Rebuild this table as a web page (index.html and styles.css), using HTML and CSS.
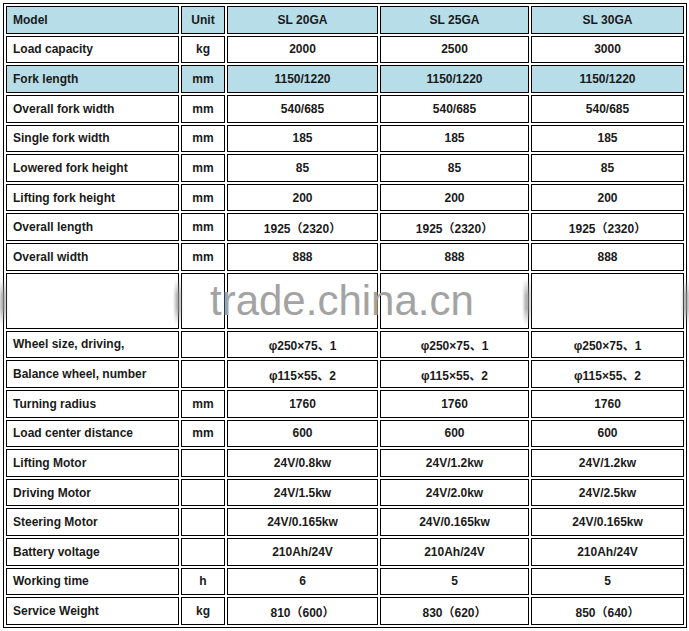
FILE: index.html
```html
<!DOCTYPE html>
<html>
<head>
<meta charset="utf-8">
<link rel="stylesheet" href="styles.css">
</head>
<body>
<div class="sheet">
  <table class="spec">
    <colgroup>
      <col class="c-name"><col class="c-unit"><col class="c-a"><col class="c-b"><col class="c-c">
    </colgroup>
    <tr class="blue"><td class="name">Model</td><td>Unit</td><td>SL 20GA</td><td>SL 25GA</td><td>SL 30GA</td></tr>
    <tr><td class="name">Load capacity</td><td>kg</td><td>2000</td><td>2500</td><td>3000</td></tr>
    <tr class="blue"><td class="name">Fork length</td><td>mm</td><td>1150/1220</td><td>1150/1220</td><td>1150/1220</td></tr>
    <tr><td class="name">Overall fork width</td><td>mm</td><td>540/685</td><td>540/685</td><td>540/685</td></tr>
    <tr><td class="name">Single fork width</td><td>mm</td><td>185</td><td>185</td><td>185</td></tr>
    <tr><td class="name">Lowered fork height</td><td>mm</td><td>85</td><td>85</td><td>85</td></tr>
    <tr><td class="name">Lifting fork height</td><td>mm</td><td>200</td><td>200</td><td>200</td></tr>
    <tr><td class="name">Overall length</td><td>mm</td><td>1925（2320）</td><td>1925（2320）</td><td>1925（2320）</td></tr>
    <tr><td class="name">Overall width</td><td>mm</td><td>888</td><td>888</td><td>888</td></tr>
    <tr class="gap"><td></td><td></td><td></td><td></td><td></td></tr>
    <tr><td class="name">Wheel size, driving,</td><td></td><td>φ250×75、1</td><td>φ250×75、1</td><td>φ250×75、1</td></tr>
    <tr><td class="name">Balance wheel, number</td><td></td><td>φ115×55、2</td><td>φ115×55、2</td><td>φ115×55、2</td></tr>
    <tr><td class="name">Turning radius</td><td>mm</td><td>1760</td><td>1760</td><td>1760</td></tr>
    <tr><td class="name">Load center distance</td><td>mm</td><td>600</td><td>600</td><td>600</td></tr>
    <tr><td class="name">Lifting Motor</td><td></td><td>24V/0.8kw</td><td>24V/1.2kw</td><td>24V/1.2kw</td></tr>
    <tr><td class="name">Driving Motor</td><td></td><td>24V/1.5kw</td><td>24V/2.0kw</td><td>24V/2.5kw</td></tr>
    <tr><td class="name">Steering Motor</td><td></td><td>24V/0.165kw</td><td>24V/0.165kw</td><td>24V/0.165kw</td></tr>
    <tr><td class="name">Battery voltage</td><td></td><td>210Ah/24V</td><td>210Ah/24V</td><td>210Ah/24V</td></tr>
    <tr><td class="name">Working time</td><td>h</td><td>6</td><td>5</td><td>5</td></tr>
    <tr><td class="name">Service Weight</td><td>kg</td><td>810（600）</td><td>830（620）</td><td>850（640）</td></tr>
  </table>
  <div class="watermark">trade.china.cn</div>
  <span class="smear s1"></span>
  <span class="smear s2"></span>
  <span class="smear s3"></span>
  <span class="smear s4"></span>
</div>
</body>
</html>
```
FILE: styles.css
```css
html, body {
  margin: 0;
  padding: 0;
  background: #ffffff;
}

.sheet {
  position: relative;
  width: 684px;
  margin: 3px 0 0 3px;
}

.spec {
  width: 684px;
  table-layout: fixed;
  border: 1px solid #000;
  border-collapse: separate;
  border-spacing: 2px;
  font-family: "Liberation Sans", Arial, "Noto Sans CJK SC", sans-serif;
  font-size: 12px;
  font-weight: bold;
  color: #1a1a1a;
}

.c-name { width: 173px; }
.c-unit { width: 44px; }
.c-a { width: 151px; }
.c-b { width: 149px; }
.c-c { width: 153px; }

.spec td {
  border: 1px solid #000;
  height: 25.63px;
  padding: 0 2px;
  text-align: center;
  vertical-align: middle;
  white-space: nowrap;
  background: #ffffff;
}

.spec td.name {
  text-align: left;
  padding-left: 6px;
}

.spec tr.blue td {
  background: #b7dde8;
}

.spec tr.gap td {
  height: 54px;
}

.watermark {
  position: absolute;
  left: 207px;
  top: 274px;
  font-family: "Liberation Sans", Arial, sans-serif;
  font-size: 42px;
  font-weight: normal;
  color: #a3a3a3;
  line-height: 48px;
  letter-spacing: 0;
}

.smear {
  position: absolute;
  top: 276px;
  width: 6px;
  height: 46px;
  background: linear-gradient(to bottom, rgba(150,150,150,0), rgba(150,150,150,0.75) 35%, rgba(150,150,150,0.75) 65%, rgba(150,150,150,0));
  filter: blur(1.5px);
}

.s1 { left: -3px; }
.s2 { left: 172px; }
.s3 { left: 521px; }
.s4 { left: 680px; }
```
